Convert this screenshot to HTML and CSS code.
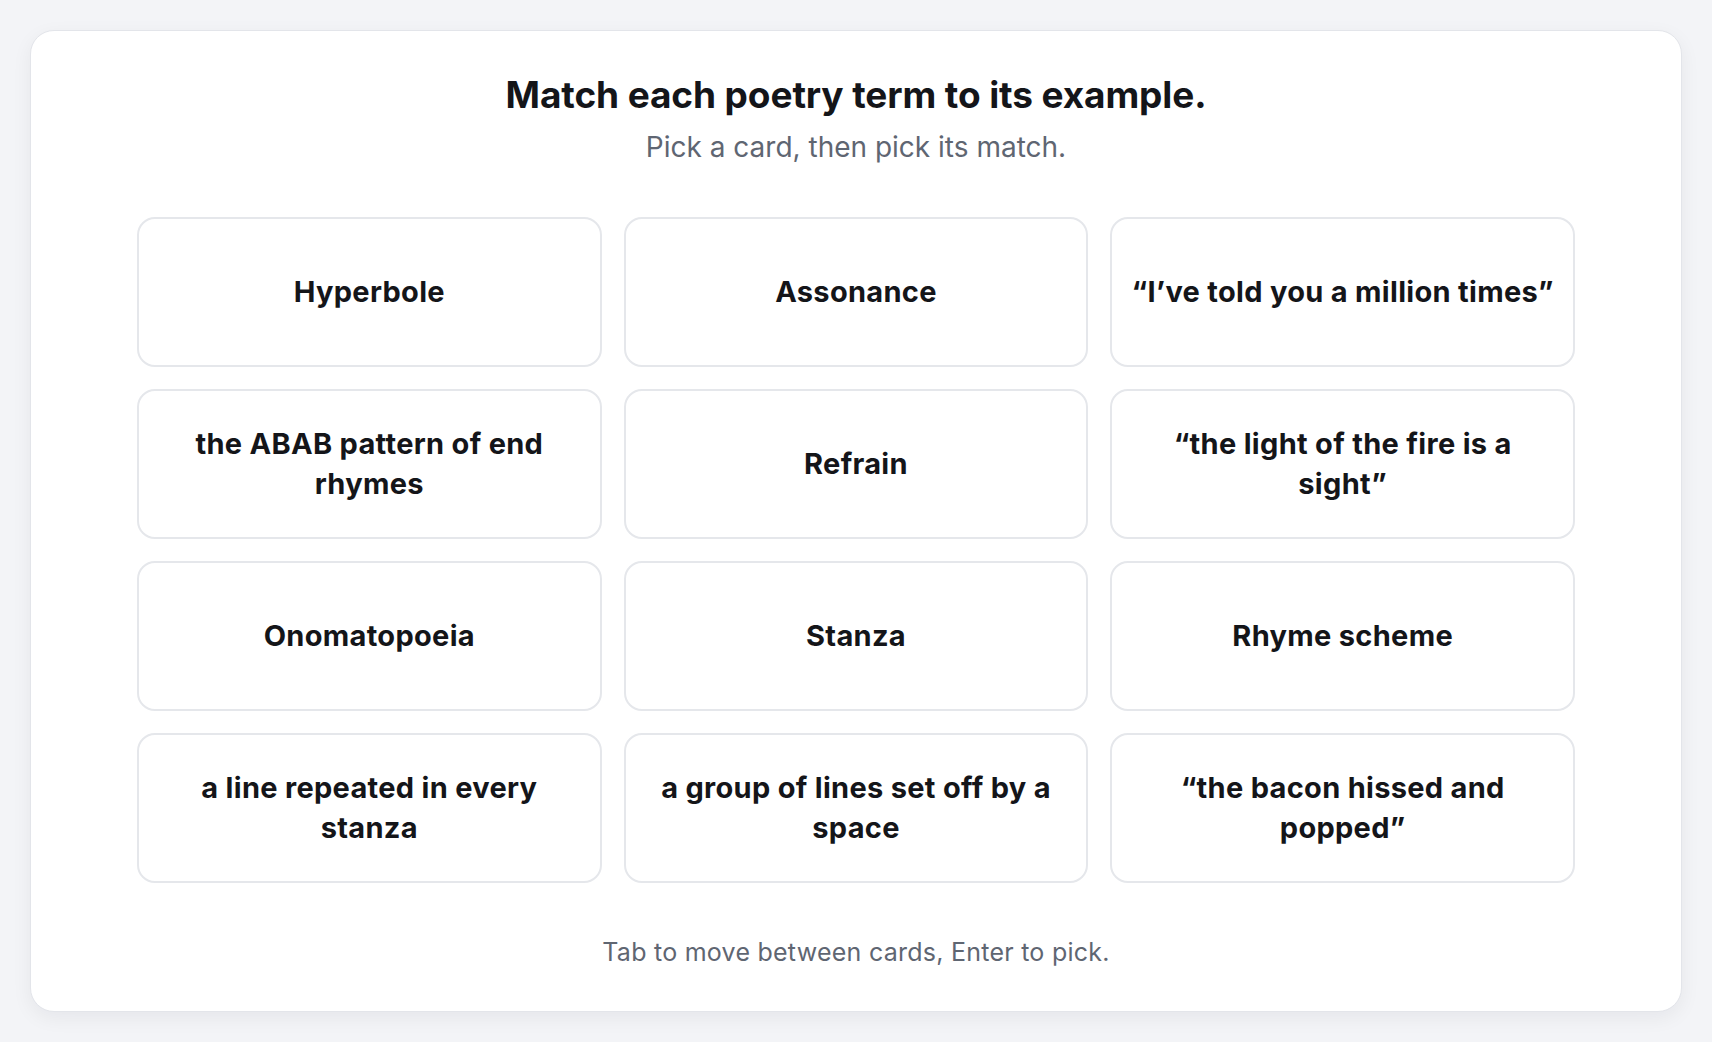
FILE: index.html
```html
<!DOCTYPE html>
<html>
<head>
    <title>Poetry Match</title>
    <link rel="stylesheet" href="styles.css">
</head>
<body>
    <div class="panel">
        <h1>Match each poetry term to its example.</h1>
        <p class="subtitle">Pick a card, then pick its match.</p>

        <div class="grid">
            <button class="card">Hyperbole</button>
            <button class="card">Assonance</button>
            <button class="card">“I’ve told you a million times”</button>
            <button class="card">the ABAB pattern of end rhymes</button>
            <button class="card">Refrain</button>
            <button class="card">“the light of the fire is a sight”</button>
            <button class="card">Onomatopoeia</button>
            <button class="card">Stanza</button>
            <button class="card">Rhyme scheme</button>
            <button class="card">a line repeated in every stanza</button>
            <button class="card">a group of lines set off by a space</button>
            <button class="card">“the bacon hissed and popped”</button>
        </div>

        <p class="hint">Tab to move between cards, Enter to pick.</p>
    </div>
</body>
</html>
```

FILE: styles.css
```css
body {
    font-family: Inter, "Noto Sans", sans-serif;
    background-color: #f3f4f7;
    margin: 0;
    padding: 30px;
}
.panel {
    background-color: #fff;
    border: 1px solid #e3e5ea;
    border-radius: 24px;
    box-shadow: 0 6px 20px rgba(17, 24, 39, 0.06);
    padding: 42px 40px 43px;
    text-align: center;
}
h1 {
    margin: 0;
    font-size: 37px;
    line-height: 44px;
    font-weight: 700;
    color: #141519;
    letter-spacing: -0.1px;
}
.subtitle {
    margin: 12px 0 0;
    font-size: 28px;
    line-height: 36px;
    color: #5f6672;
}
.grid {
    max-width: 1438px;
    margin: 52px auto 0;
    display: grid;
    grid-template-columns: repeat(3, 1fr);
    gap: 22px;
}
.card {
    height: 150px;
    padding: 0 18px;
    background-color: #fff;
    border: 2px solid #e5e7eb;
    border-radius: 18px;
    font-family: inherit;
    font-size: 29px;
    line-height: 40px;
    font-weight: 700;
    letter-spacing: 0.3px;
    color: #141519;
    cursor: pointer;
}
.hint {
    margin: 53px 0 0;
    font-size: 25px;
    line-height: 32px;
    letter-spacing: 0.25px;
    color: #5f6672;
}
```
